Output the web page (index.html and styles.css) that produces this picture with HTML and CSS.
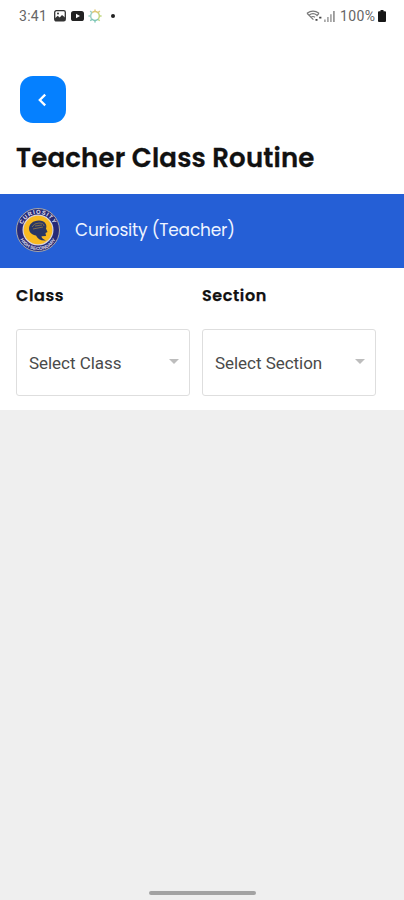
FILE: index.html
```html
<!DOCTYPE html>
<html lang="en">
<head>
<meta charset="utf-8">
<title>Teacher Class Routine</title>
<link rel="stylesheet" href="styles.css">
</head>
<body>
<div class="screen">
  <header class="status">
    <div class="status-left">
      <span class="time">3:41</span>
      <svg class="ic-photo" width="12" height="12" viewBox="0 0 12 12"><rect x=".7" y=".7" width="10.6" height="10.2" rx="1.6" fill="#fff" stroke="#333" stroke-width="1.3"/><path d="M1 8.3 3.7 5.8l2 1.6L8 5l3 2.6V11H1z" fill="#333"/><circle cx="4" cy="3.5" r="1" fill="#333"/></svg>
      <svg class="ic-video" width="13" height="10" viewBox="0 0 13 10"><rect width="13" height="10" rx="2.6" fill="#222"/><path d="M5 2.7v4.6L9 5z" fill="#fff"/></svg>
      <svg class="ic-sun" width="14" height="14" viewBox="-7 -7 14 14" fill="none" stroke-width="1.5"><path d="M-3 -3.2A4.4 4.4 0 0 1 3 -3.2M0-4.3V-6.5M3-3.2 4.8-5" stroke="#dfc878"/><path d="M3-3.2A4.4 4.4 0 0 1 3 3.2M4.3 0H6.6M3 3.2 4.7 4.8" stroke="#c1d783"/><path d="M3 3.2A4.4 4.4 0 0 1-3 3.2M0 4.3V6.5M-3 3.2-4.7 4.8" stroke="#7cc5b5"/><path d="M-3 3.2A4.4 4.4 0 0 1-3-3.2M-4.3 0H-6.6M-3-3.2-4.8-5" stroke="#9bd0c4"/></svg>
      <i class="dot"></i>
    </div>
    <div class="status-right">
      <svg width="17" height="12" viewBox="0 0 17 12" fill="none" stroke="#777" stroke-width="1.2"><path d="M1 3.3Q7-1.2 13 3.3M3 5.2Q7 2.2 11 5.2M1 3.3 7.4 9.6M13 3.3 10.6 6M5 7.2Q7 5.8 9 7.2"/><path d="M9.5 9.8h2M13.2 7.7h2.2" stroke="#444" stroke-width="1.8"/></svg>
      <svg class="ic-signal" width="11" height="11" viewBox="0 0 11 11" fill="#aaa"><path d="M0 8.5h1.8V11H0zM3 6h1.8v5H3zM6 3.3h1.8V11H6z"/><path d="M9 0h1.8v11H9z" fill="#999"/></svg>
      <span class="percent">100%</span>
      <svg class="ic-battery" width="8" height="12" viewBox="0 0 8 12" fill="#161616"><path d="M2.5 0h3v1.3H7A1 1 0 0 1 8 2.3V11a1 1 0 0 1-1 1H1a1 1 0 0 1-1-1V2.3a1 1 0 0 1 1-1h1.5z"/></svg>
    </div>
  </header>
  <button class="back" aria-label="Back"><svg width="12" height="16" viewBox="0 0 12 16" fill="none" stroke="#fff" stroke-width="2.3"><path d="M9.2 2.6 3.8 8l5.4 5.4"/></svg></button>
  <h1>Teacher Class Routine</h1>
  <section class="profile">
    <svg class="logo" width="44" height="44" viewBox="-22 -22 44 44">
      <circle r="21.5" fill="#262a78" stroke="#a8a6a6" stroke-width="1"/>
      <circle r="14.9" fill="#f8ba20" stroke="#d8d4dc" stroke-width="1.2"/>
      <path d="M-9-1C-9-6-5-9.5 1-9.5 7-9.5 9.5-5 8-1.5L9.5 2 7.5 3 8 6 3.5 6.3C3.5 8 5 9 8 10.5 3 11-.5 9-2 5.5-5.5 5-8.5 3-9-1z" fill="#293664"/>
      <path d="M-6-3Q-4-7 1-7T6-4M-5-1 5-3M-3-4 4-5" fill="none" stroke="#806d4c" stroke-width="1"/>
      <path id="top" d="M-16.3 2A16.4 16.4 0 1 1 16.3 2" fill="none"/>
      <path id="bottom" d="M-19 6.5A20.1 20.1 0 0 0 19 6.5" fill="none"/>
      <text class="seal top"><textPath href="#top" startOffset="50%" text-anchor="middle">CURIOSITY</textPath></text>
      <text class="seal bottom"><textPath href="#bottom" startOffset="50%" text-anchor="middle">HIGH SECONDARY</textPath></text>
    </svg>
    <span class="name">Curiosity (Teacher)</span>
  </section>
  <section class="filters">
    <div class="field"><label>Class</label><div class="select"><span>Select Class</span><i class="caret"></i></div></div>
    <div class="field"><label>Section</label><div class="select"><span>Select Section</span><i class="caret"></i></div></div>
  </section>
  <main class="content"><i class="home"></i></main>
</div>
</body>
</html>
```
FILE: styles.css
```css
* { box-sizing: border-box; }
body { margin: 0; background: #efefef; font-family: Poppins, Inter, sans-serif; }
.screen { width: 404px; height: 900px; display: flex; flex-direction: column; background: #fff; }
.status { height: 32px; flex: none; display: flex; justify-content: space-between; padding: 0 18px 0 19px; font: 14px/32px Roboto, sans-serif; color: #666; }
.status-left, .status-right { display: flex; align-items: center; }
.time { width: 28px; letter-spacing: .3px; }
.ic-photo { margin-left: 7px; }
.ic-video { margin-left: 5px; }
.ic-sun { margin-left: 4px; }
.dot { width: 4px; height: 4px; border-radius: 2px; background: #222; margin-left: 9px; }
.ic-signal { margin-left: 1px; }
.percent { margin-left: 5px; width: 36px; letter-spacing: .4px; white-space: nowrap; }
.ic-battery { margin-left: 2px; }
.back { width: 46px; height: 47px; flex: none; margin: 44px 0 0 20px; padding: 0 3px 0 0; border: 0; border-radius: 13px; background: #0580ff; display: flex; align-items: center; justify-content: center; }
h1 { margin: 0; padding: 1px 16px 0; height: 71px; flex: none; font-size: 26px; line-height: 68px; font-weight: 600; color: #111; letter-spacing: .19px; -webkit-text-stroke: .3px #111; white-space: nowrap; }
.profile { height: 74px; flex: none; background: #255fd6; display: flex; align-items: center; padding: 0 16px; }
.logo { flex: none; margin-top: -2px; }
.seal { font-family: "Liberation Sans", sans-serif; font-weight: 700; fill: #e3e0ed; }
.top { font-size: 5.8px; letter-spacing: .9px; }
.bottom { font-size: 4.7px; }
.name { margin: -3px 0 0 15px; font-size: 17px; line-height: 26px; color: #eef4ff; letter-spacing: -.2px; white-space: nowrap; }
.filters { height: 142px; flex: none; display: flex; gap: 12px; padding: 16px 16px 0; }
.field { width: 174px; }
label { display: block; height: 45px; font-size: 16px; line-height: 24px; font-weight: 600; color: #111; letter-spacing: .6px; -webkit-text-stroke: .25px #111; }
.select { height: 67px; border: 1px solid #dedede; border-radius: 3px; display: flex; align-items: center; justify-content: space-between; padding: 0 10px 0 12px; font: 17px/24px Roboto, sans-serif; letter-spacing: -.04px; color: #4a4a4a; white-space: nowrap; }
.caret { border: 5px solid transparent; border-top-color: #bdbdbd; border-bottom: 0; margin-top: -2px; }
.content { flex: 1; background: #efefef; display: flex; align-items: flex-end; justify-content: center; padding-bottom: 5px; }
.home { width: 107px; height: 4px; border-radius: 2px; background: #a3a3a3; }
```
